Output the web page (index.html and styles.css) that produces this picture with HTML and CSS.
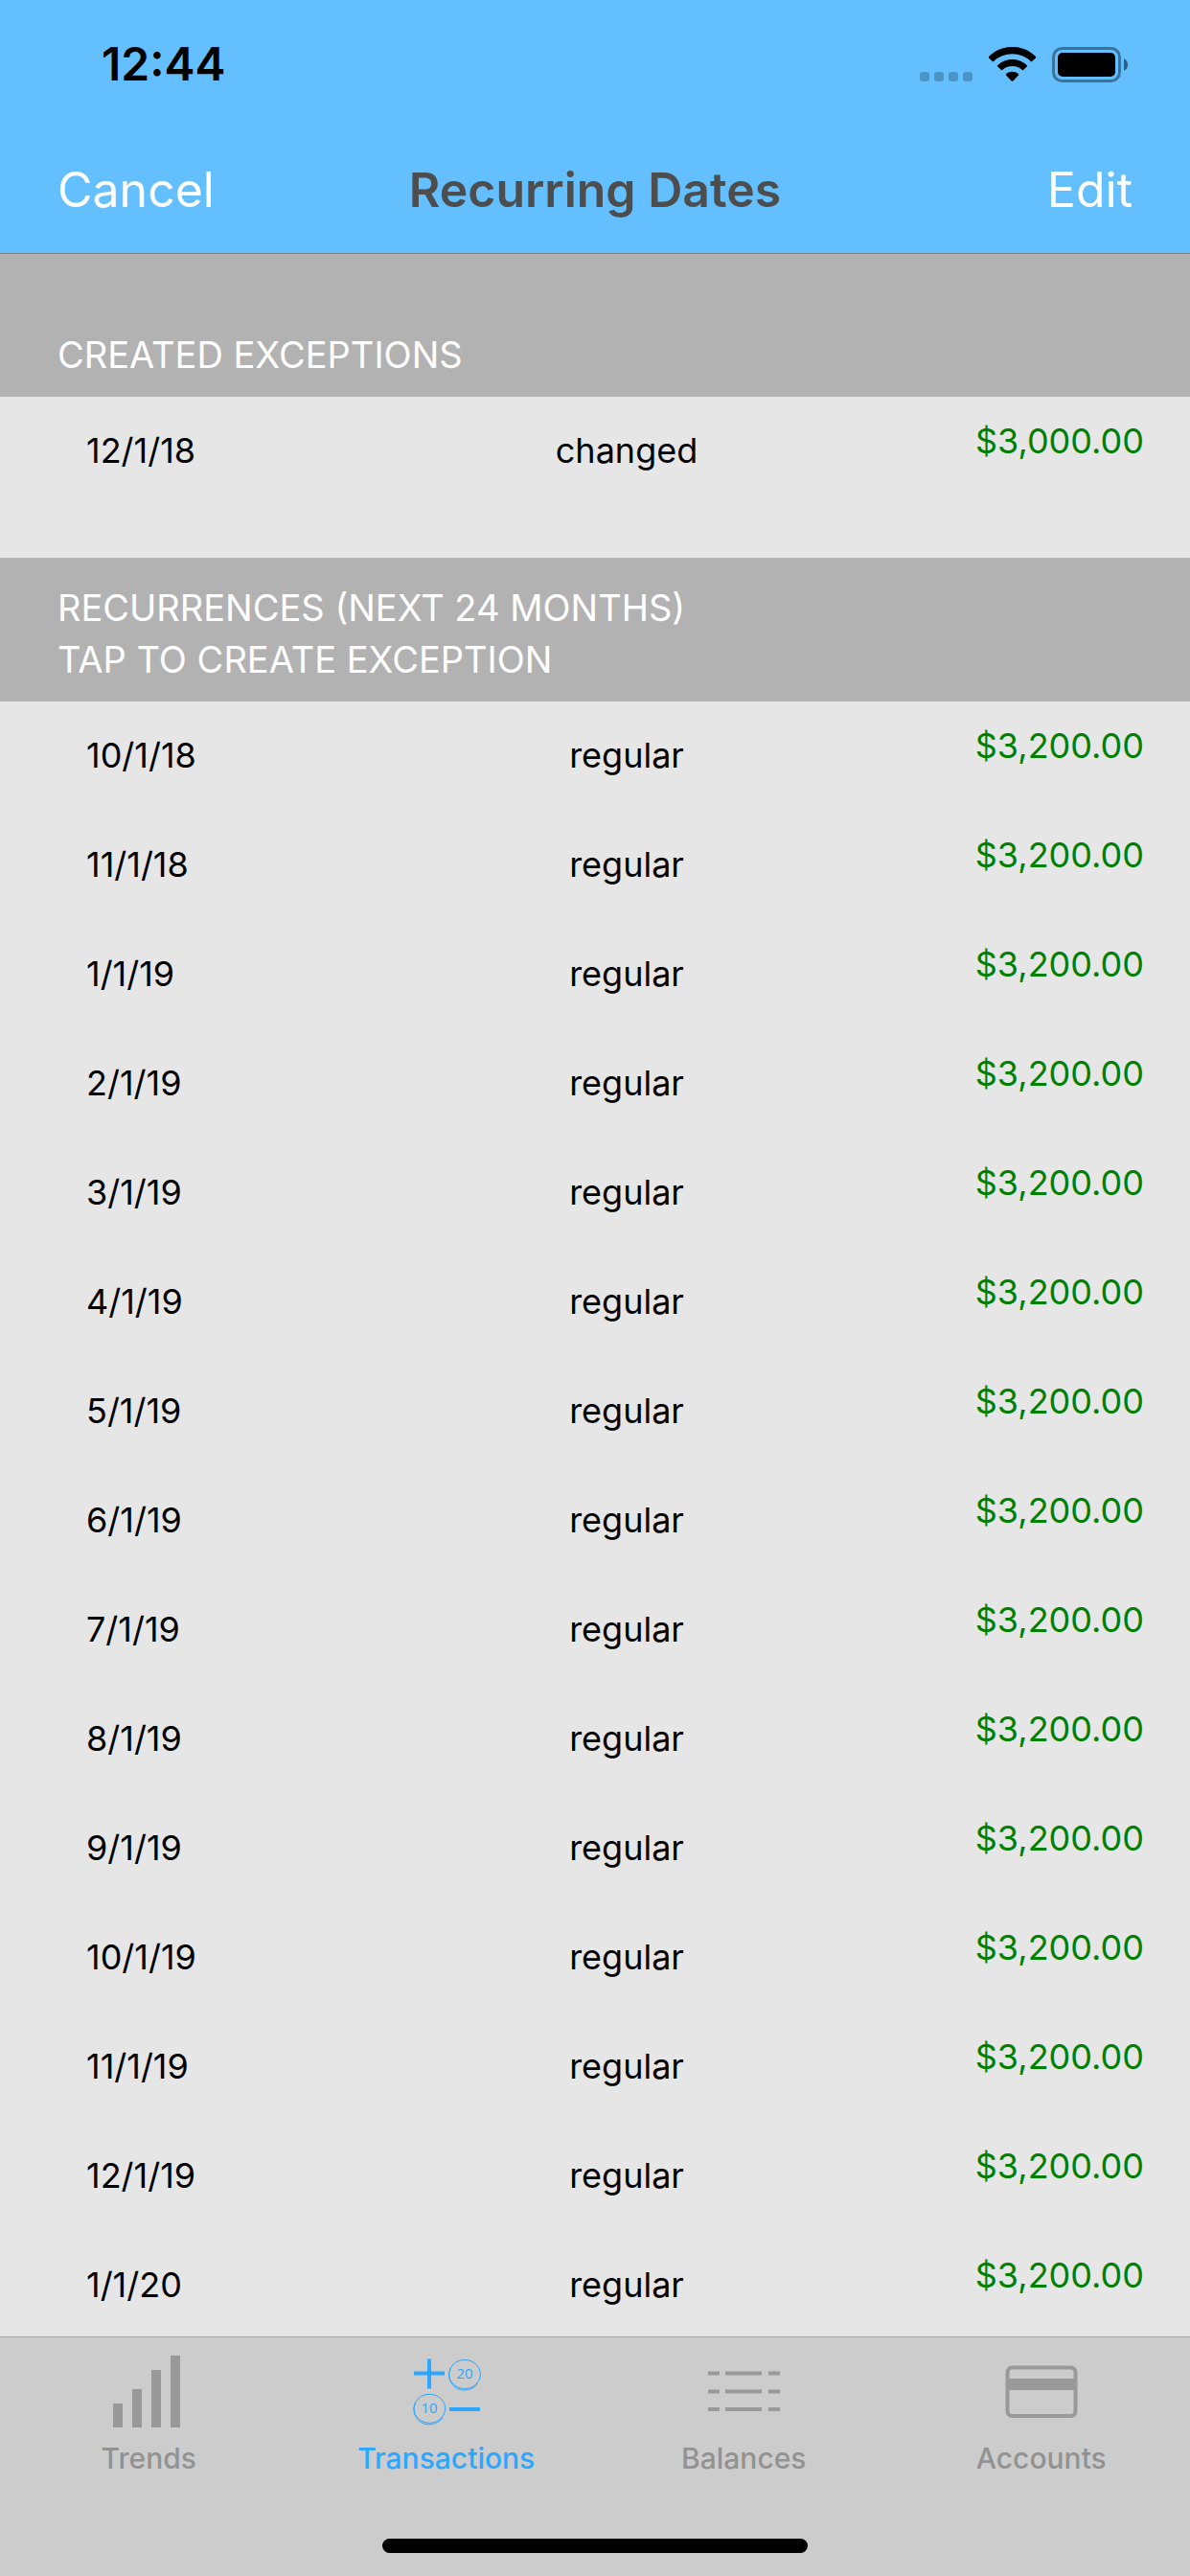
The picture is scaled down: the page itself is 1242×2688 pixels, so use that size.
FILE: index.html
```html
<!DOCTYPE html>
<html lang="en">
<head>
    <meta charset="UTF-8">
    <meta name="viewport" content="width=device-width, initial-scale=1.0">
    <title>Recurring Dates</title>
    <link rel="stylesheet" href="styles.css">
</head>
<body>
    <header class="top">
        <div class="status-bar">
            <span class="time">12:44</span>
            <svg class="status-icons" viewBox="0 0 218 38" aria-hidden="true">
                <g fill="#000" opacity="0.22">
                    <rect x="0" y="26" width="10" height="10" rx="3"/>
                    <rect x="15" y="26" width="10" height="10" rx="3"/>
                    <rect x="30" y="26" width="10" height="10" rx="3"/>
                    <rect x="45" y="26" width="10" height="10" rx="3"/>
                </g>
                <path d="M72 11.5Q71.500 10.500 72.500 9.500C86-3.300 107-3.300 120.500 9.500Q121.500 10.500 121 11.500L116.500 15.500C105 4.600 88 4.600 76.500 15.500Z"/>
                <path d="M81 20.300Q80.600 19.600 81.300 18.900C90 11 103 11 111.700 18.900Q112.400 19.600 112 20.300L107.500 24.500C101 18.600 92 18.600 85.500 24.500Z"/>
                <path d="M90 29.400Q89.500 28.700 90.200 28.100C94 24.900 99 24.900 102.800 28.100Q103.500 28.700 103 29.400L97.300 35.400Q96.500 36.200 95.700 35.400Z"/>
                <rect x="139.500" y="1.500" width="69" height="34" rx="9" fill="none" stroke="#000" stroke-width="3" opacity="0.4"/>
                <rect x="144" y="6" width="60" height="25" rx="5"/>
                <path d="M213 12q4 2 4 6.500t-4 6.500z" opacity="0.5"/>
            </svg>
        </div>
        <nav class="nav-bar">
            <button class="nav-button">Cancel</button>
            <h1>Recurring Dates</h1>
            <button class="nav-button nav-right">Edit</button>
        </nav>
    </header>

    <main>
        <section class="exceptions">
            <h2>CREATED EXCEPTIONS</h2>
            <table>
                <tr><td class="date">12/1/18</td><td class="type">changed</td><td class="amount">$3,000.00</td></tr>
            </table>
        </section>
        <section>
            <h2>RECURRENCES (NEXT 24 MONTHS)<br>TAP TO CREATE EXCEPTION</h2>
            <table>
                <tr><td class="date">10/1/18</td><td class="type">regular</td><td class="amount">$3,200.00</td></tr>
                <tr><td class="date">11/1/18</td><td class="type">regular</td><td class="amount">$3,200.00</td></tr>
                <tr><td class="date">1/1/19</td><td class="type">regular</td><td class="amount">$3,200.00</td></tr>
                <tr><td class="date">2/1/19</td><td class="type">regular</td><td class="amount">$3,200.00</td></tr>
                <tr><td class="date">3/1/19</td><td class="type">regular</td><td class="amount">$3,200.00</td></tr>
                <tr><td class="date">4/1/19</td><td class="type">regular</td><td class="amount">$3,200.00</td></tr>
                <tr><td class="date">5/1/19</td><td class="type">regular</td><td class="amount">$3,200.00</td></tr>
                <tr><td class="date">6/1/19</td><td class="type">regular</td><td class="amount">$3,200.00</td></tr>
                <tr><td class="date">7/1/19</td><td class="type">regular</td><td class="amount">$3,200.00</td></tr>
                <tr><td class="date">8/1/19</td><td class="type">regular</td><td class="amount">$3,200.00</td></tr>
                <tr><td class="date">9/1/19</td><td class="type">regular</td><td class="amount">$3,200.00</td></tr>
                <tr><td class="date">10/1/19</td><td class="type">regular</td><td class="amount">$3,200.00</td></tr>
                <tr><td class="date">11/1/19</td><td class="type">regular</td><td class="amount">$3,200.00</td></tr>
                <tr><td class="date">12/1/19</td><td class="type">regular</td><td class="amount">$3,200.00</td></tr>
                <tr><td class="date">1/1/20</td><td class="type">regular</td><td class="amount">$3,200.00</td></tr>
            </table>
        </section>
    </main>

    <footer class="tab-bar">
        <nav class="tabs">
            <a class="tab" href="#trends">
                <svg viewBox="0 0 80 80" fill="#999" aria-hidden="true">
                    <path d="M3 52h10v25H3zM23 37h10v40H23zM43 17h10v60H43zM63 2h10v75H63z"/>
                </svg>
                Trends
            </a>
            <a class="tab active" href="#transactions">
                <svg viewBox="0 0 80 80" fill="none" stroke="#2ba7ff" aria-hidden="true">
                    <path d="M6 20.500h32M22 5.500v31M43 58h32" stroke-width="4"/>
                    <ellipse cx="59" cy="21.500" rx="16.500" ry="15"/>
                    <path d="M44.500 15.500C39 26 47 38 58 38c7 0 12-3 14.500-7"/>
                    <ellipse cx="22.300" cy="57.300" rx="16.500" ry="15"/>
                    <path d="M7.800 51.300C2.300 62 10.300 73.800 21.300 73.800c7 0 12-3 14.500-7"/>
                    <g class="coin-text">
                        <text x="59" y="26">20</text>
                        <text x="22" y="62">10</text>
                    </g>
                </svg>
                Transactions
            </a>
            <a class="tab" href="#balances">
                <svg viewBox="0 0 80 80" stroke="#999" stroke-width="4" aria-hidden="true">
                    <path d="M3 20.500h12M21 20.500h38M66 20.500h12M3 39.500h12M21 39.500h38M66 39.500h12M3 58h12M21 58h38M66 58h12"/>
                </svg>
                Balances
            </a>
            <a class="tab" href="#accounts">
                <svg viewBox="0 0 80 80" fill="none" stroke="#999" stroke-width="4" aria-hidden="true">
                    <rect x="4.500" y="14.500" width="71" height="50.500" rx="5"/>
                    <path d="M4 32h72" stroke-width="12"/>
                </svg>
                Accounts
            </a>
        </nav>
        <div class="home-indicator"></div>
    </footer>
</body>
</html>
```
FILE: styles.css
```css
* {
    box-sizing: border-box;
}

body {
    margin: 0;
    height: 100vh;
    display: flex;
    flex-direction: column;
    font-family: Inter, "Liberation Sans", sans-serif;
    background-color: #e6e6e6;
    color: #000;
}

/* Header */
.top {
    flex: none;
    background-color: #64bfff;
    border-bottom: 1px solid #808080;
}

.status-bar {
    display: flex;
    justify-content: space-between;
    align-items: center;
    height: 132px;
    padding: 4px 64px 0 106px;
}

.time {
    padding-bottom: 4px;
    font-size: 48px;
    font-weight: 600;
}

.status-icons {
    width: 218px;
    height: 38px;
}

.nav-bar {
    display: grid;
    grid-template-columns: 1fr auto 1fr;
    align-items: center;
    height: 132px;
    padding: 0 60px;
}

.nav-bar h1 {
    margin: 0;
    font-size: 50px;
    font-weight: 600;
    color: #4d4d4d;
}

.nav-button {
    padding: 0;
    border: none;
    background: none;
    font-family: inherit;
    font-size: 50px;
    color: #fff;
    text-align: left;
    cursor: pointer;
}

.nav-right {
    text-align: right;
}

/* Lists */
main {
    flex: 1;
    min-height: 0;
    overflow-y: auto;
    scrollbar-width: none;
}

h2 {
    margin: 0;
    padding: 25px 60px 17px;
    background-color: #b2b2b2;
    color: #fff;
    font-size: 38px;
    font-weight: 400;
    line-height: 54px;
}

.exceptions {
    padding-bottom: 54px;
}

.exceptions h2 {
    padding-top: 78px;
}

table {
    width: 100%;
    table-layout: fixed;
    border-collapse: collapse;
}

tr {
    height: 114px;
}

td {
    padding: 34px 0 0;
    font-size: 36px;
    line-height: 44px;
    vertical-align: top;
}

.date {
    width: 34%;
    padding-left: 90px;
}

.type {
    width: 37%;
    padding-left: 4px;
    text-align: center;
}

.amount {
    padding-top: 24px;
    padding-right: 48px;
    color: #008000;
    text-align: right;
}

/* Tab bar */
.tab-bar {
    flex: none;
    display: flex;
    flex-direction: column;
    justify-content: space-between;
    align-items: center;
    height: 250px;
    padding: 17px 0 24px;
    background-color: #ccc;
    border-top: 1px solid #a3a3a3;
}

.tabs {
    display: grid;
    grid-template-columns: repeat(4, 1fr);
    width: 100%;
}

.tab {
    display: flex;
    flex-direction: column;
    align-items: center;
    gap: 11px;
    color: #929292;
    font-size: 30px;
    font-weight: 500;
    line-height: 36px;
    text-decoration: none;
}

.tab svg {
    width: 80px;
    height: 80px;
}

.tab.active {
    color: #2ba7ff;
}

.coin-text {
    fill: #2ba7ff;
    stroke: none;
    font-family: "Open Sans", sans-serif;
    font-size: 15px;
    font-weight: 400;
    text-anchor: middle;
}

.home-indicator {
    width: 444px;
    height: 15px;
    border-radius: 8px;
    background-color: #000;
}
```
